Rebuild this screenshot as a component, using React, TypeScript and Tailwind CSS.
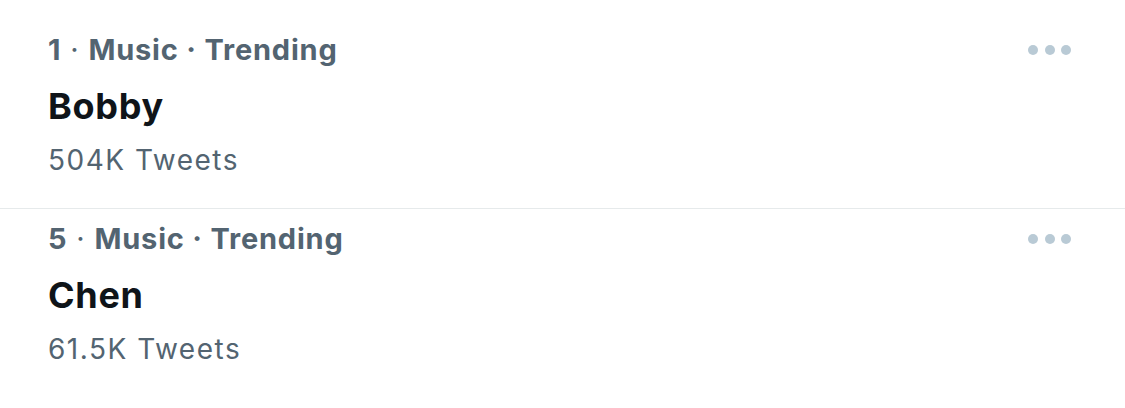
const trends = [
  { rank: 1, category: 'Music', name: 'Bobby', count: '504K Tweets' },
  { rank: 5, category: 'Music', name: 'Chen', count: '61.5K Tweets' },
]

function MoreDots() {
  return (
    <div className="flex items-center gap-[6.5px] h-[40px]">
      <span className="w-[10px] h-[10px] rounded-full bg-[#b9cad5]" />
      <span className="w-[10px] h-[10px] rounded-full bg-[#b9cad5]" />
      <span className="w-[10px] h-[10px] rounded-full bg-[#b9cad5]" />
    </div>
  )
}

export default function App() {
  return (
    <div className="w-[1125px] h-[408px] bg-white pt-[20px] overflow-hidden font-['Inter',sans-serif]">
      {trends.map((t, i) => (
        <div
          key={t.name}
          className={
            'flex justify-between pl-[48px] pr-[54px] pt-[9.5px] pb-[30px] ' +
            (i === 0 ? 'border-b border-[#e6eaeb]' : '')
          }
        >
          <div className="flex flex-col">
            <div className="text-[29px] leading-[40px] font-bold tracking-[0.8px] text-[#536471]">
              {t.rank}
              <span className="font-normal"> · </span>
              {t.category} · Trending
            </div>
            <div className="mt-[12.5px] text-[36px] leading-[48px] font-bold tracking-[0.7px] text-[#0f1419]">
              {t.name}
            </div>
            <div className="mt-[12px] text-[28px] leading-[36px] tracking-[1.5px] text-[#536471]">{t.count}</div>
          </div>
          <MoreDots />
        </div>
      ))}
    </div>
  )
}
